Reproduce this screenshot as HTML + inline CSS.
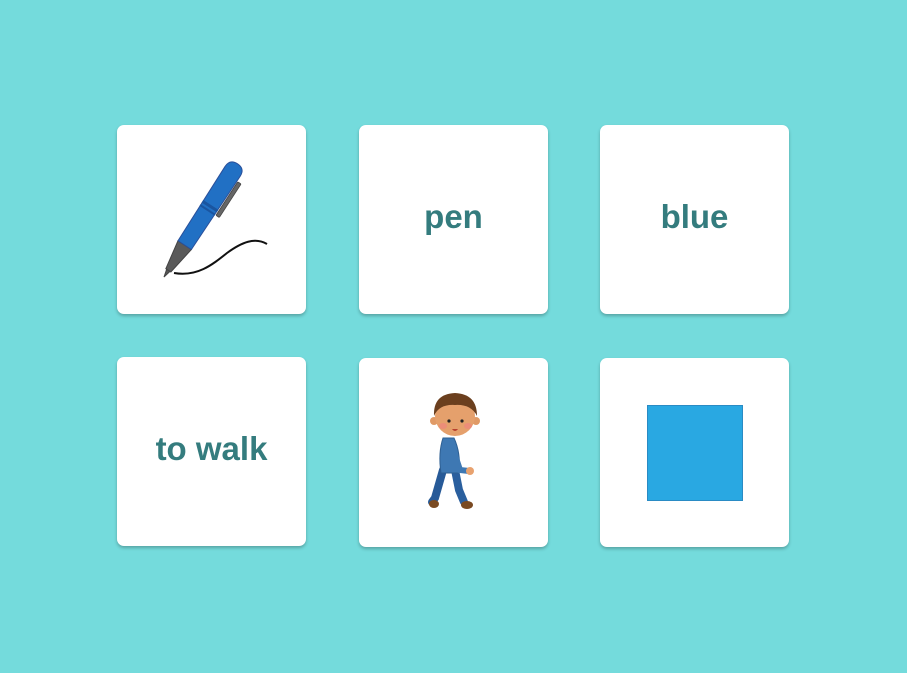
<!DOCTYPE html>
<html><head><style>
html,body{margin:0;padding:0;}
body{width:907px;height:673px;background:#74dbdc;position:relative;overflow:hidden;font-family:"Liberation Sans",sans-serif;}
.c{position:absolute;width:189px;height:189px;background:#fff;border-radius:7px;box-shadow:0 2px 3px rgba(0,0,0,0.25);display:flex;align-items:center;justify-content:center;}
.t{color:#347c7e;font-weight:bold;font-size:33px;position:relative;top:-3px;}
</style></head><body>
<div class="c" style="left:117px;top:125px;">
<svg width="189" height="189" viewBox="0 0 189 189">
<path d="M57 148 C80 152 95 140 110 128 C125 117 138 112 150 119" fill="none" stroke="#111" stroke-width="2"/>
<g transform="translate(47,152) rotate(33)">
<path d="M-2 -8 L0 0 L2 -8 Z" fill="#555" stroke="#444" stroke-width="1"/>
<path d="M-3 -8 L-8 -38 L8 -38 L3 -8 Z" fill="#5a5a5a" stroke="#444" stroke-width="1"/>
<path d="M-8 -38 L-9 -126 Q-9 -135 0 -135 Q9 -135 9 -126 L8 -38 Z" fill="#2170c4" stroke="#2a4f9a" stroke-width="1"/>
<rect x="-9" y="-86" width="18" height="3" fill="#1a55a0"/>
<rect x="-9" y="-81" width="18" height="2" fill="#1a55a0"/>
<rect x="10" y="-120" width="4" height="40" rx="1" fill="#666" stroke="#444" stroke-width="0.8"/>
</g>
</svg></div>
<div class="c" style="left:359px;top:125px;"><span class="t">pen</span></div>
<div class="c" style="left:600px;top:125px;"><span class="t">blue</span></div>
<div class="c" style="left:117px;top:357px;"><span class="t">to walk</span></div>
<div class="c" style="left:359px;top:358px;">
<svg width="189" height="189" viewBox="0 0 189 189">
<path d="M84 112 L76 140 L73 144" stroke="#275a98" stroke-width="8" fill="none" stroke-linecap="round"/>
<path d="M96 112 L100 132 L105 144" stroke="#2a5f9e" stroke-width="8" fill="none" stroke-linecap="round"/>
<ellipse cx="75" cy="146" rx="5" ry="4" fill="#7a4a22"/>
<ellipse cx="108" cy="147" rx="6" ry="4" fill="#7a4a22"/>
<path d="M84 80 Q79 95 82 115 L100 115 Q102 95 95 80 Z" fill="#3e78b3" stroke="#2e5f92" stroke-width="1"/>
<path d="M93 88 L101 112 L110 113" stroke="#3e78b3" stroke-width="6" fill="none" stroke-linecap="round"/>
<circle cx="111" cy="113" r="4" fill="#e8a26f"/>
<circle cx="75" cy="63" r="4" fill="#e09a66"/>
<circle cx="117" cy="63" r="4" fill="#e09a66"/>
<circle cx="96" cy="58" r="20" fill="#e5a06c"/>
<path d="M75 58 Q74 36 96 35 Q118 36 118 58 Q112 46 96 47 Q80 46 75 58 Z" fill="#6b3f1e"/>
<circle cx="90" cy="63" r="1.6" fill="#222"/><circle cx="103" cy="63" r="1.6" fill="#222"/>
<ellipse cx="84" cy="68" rx="4" ry="3" fill="#f08080" opacity=".6"/>
<ellipse cx="109" cy="68" rx="4" ry="3" fill="#f08080" opacity=".6"/>
<path d="M93 71 Q96 75 99 71 Z" fill="#b8402e"/>
</svg></div>
<div class="c" style="left:600px;top:358px;">
<div style="width:94px;height:94px;background:#29a8e2;border:1px solid #2a8bc4;"></div>
</div>
</body></html>
